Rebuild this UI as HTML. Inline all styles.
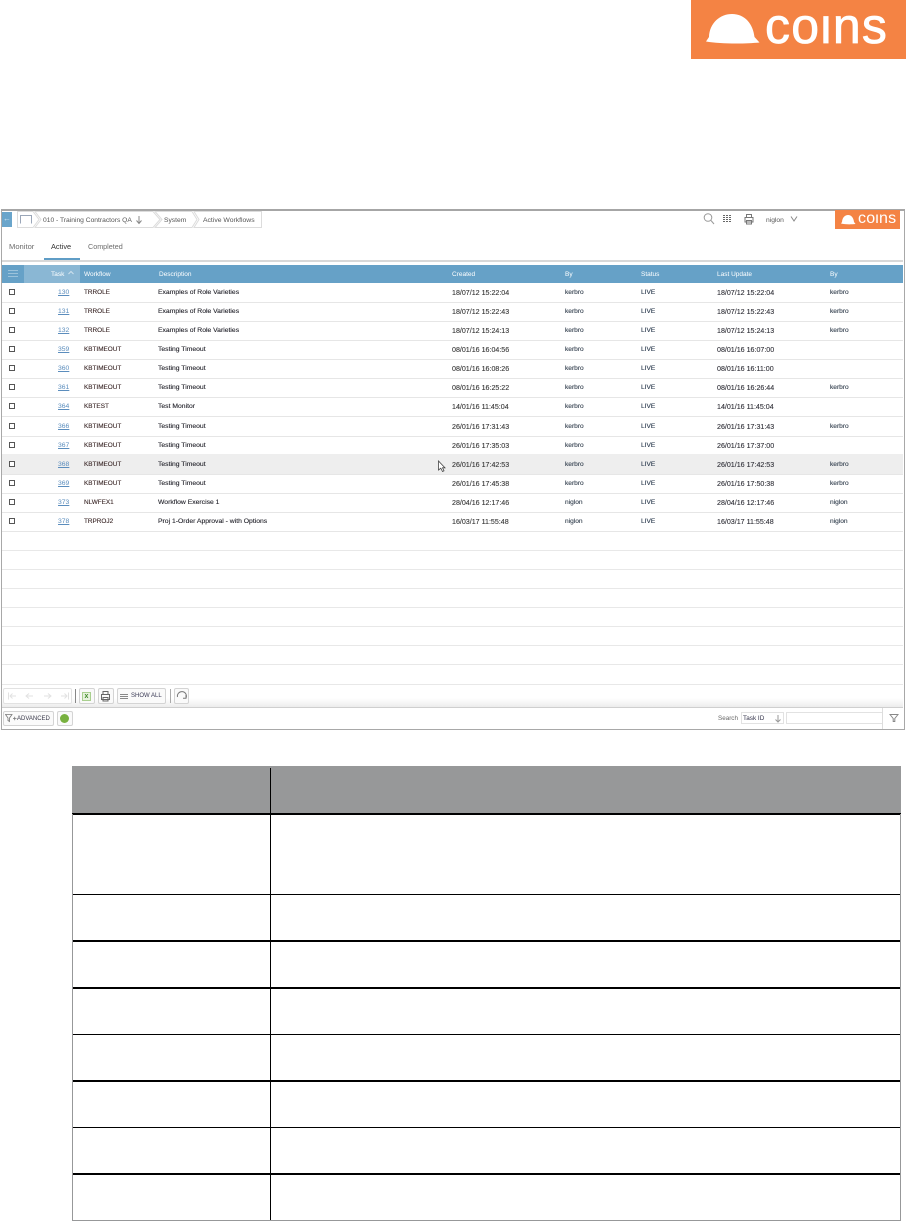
<!DOCTYPE html>
<html><head><meta charset="utf-8">
<style>
html,body{margin:0;padding:0;background:#fff}
body{position:relative;width:906px;height:1221px;overflow:hidden;font-family:"Liberation Sans",sans-serif}
.a{position:absolute}
.t{position:absolute;font-size:6.7px;line-height:10px;white-space:nowrap;color:#2b2b33}
.h{position:absolute;top:270px;font-size:6.5px;line-height:10px;color:#fff;white-space:nowrap}
.r{position:absolute;left:2px;width:901px;height:19px;border-bottom:1px solid #e6e6e6}
.r span{position:absolute;top:5px;font-size:6.6px;line-height:10px;white-space:nowrap;color:#24242c;-webkit-text-stroke:.12px currentColor}
.r i{position:absolute;left:7px;top:6px;width:4px;height:4px;border:1px solid #555;background:#fff}
.r .n{left:56px;font-size:6.8px;color:#5b8dbd;text-decoration:underline;-webkit-text-stroke:0}
.r .w{left:82px;font-size:6.4px;color:#3d2a2a}
.r .d{left:156px;font-size:6.8px}
.r .c{left:450px;font-size:7.1px;color:#3a3a3a}
.r .b{left:563px;color:#34404f}
.r .s{left:639px;color:#26364a}
.r .u{left:715px;font-size:7.1px;color:#34343c}
.r .y{left:828px;color:#34404f}
.l{position:absolute;left:2px;width:901px;height:1px;background:#e8e8e8}
.btn{position:absolute;background:#fafafa;border:1px solid #d4d4d4;border-radius:2px;box-sizing:border-box}
.tl{position:absolute;background:#000}
</style></head><body>

<!-- top logo -->
<div class="a" style="left:691px;top:0;width:215px;height:59px;background:#f48344"></div>
<svg class="a" style="left:691px;top:0" width="215" height="59" viewBox="691 0 215 59"><path d="M706 41.500L709 37C709.500 23 720 14 732 14C745 14 753 24 754.500 37L759.500 42.500C745 44 720 44 706 41.500Z" fill="#fff"/></svg>
<div class="a" style="left:765px;top:-4px;font-size:50px;line-height:60px;color:#fff;letter-spacing:1.3px;-webkit-text-stroke:.8px #fff;clip-path:inset(18.500px 0 0 0)">coins</div>

<!-- app frame -->
<div class="a" style="left:1px;top:209px;width:902px;height:518px;border:1px solid #a8a8a8;border-top:2px solid #a6a6a6"></div>

<!-- breadcrumb -->
<div class="a" style="left:2px;top:212px;width:10px;height:15px;background:#6aa5cb"></div>
<div class="a" style="left:3px;top:214px;color:#cfe3f0;font-size:8px;line-height:10px">&#8592;</div>
<svg class="a" style="left:14px;top:210px" width="250" height="19" fill="#fff" stroke="#dcdcdc" stroke-width="1">
<path d="M3.500 1.500H19L25 9.500L19 17.500H3.500Z"/>
<path d="M21 1.500H139L146 9.500L139 17.500H21L27 9.500Z"/>
<path d="M141 1.500H178L183 9.500L178 17.500H141L148 9.500Z"/>
<path d="M180 1.500H247.500V17.500H180L185 9.500Z"/>
<path d="M6.500 13.500V5.500H17.500V13.500" stroke="#9aa6b8" fill="none"/>
<path d="M125 6V13M122.500 10.500L125 13.500L127.500 10.500" stroke="#888" fill="none"/>
</svg>
<div class="t" style="left:43px;top:216px;color:#555">010 - Training Contractors QA</div>
<div class="t" style="left:164px;top:216px;color:#555">System</div>
<div class="t" style="left:203px;top:216px;color:#555;font-size:6.8px">Active Workflows</div>

<!-- top right icons -->
<svg class="a" style="left:700px;top:211px" width="110" height="16" fill="none" stroke="#999" stroke-width="1">
<circle cx="8" cy="6.500" r="3.800"/><path d="M11 9.500L14 13"/>
<path d="M23 4.500h9M23 6.500h9M23 8.500h9M23 10.500h9" stroke="#666" stroke-dasharray="2 1"/>
<path d="M45 6.500h8v4.500h-8zM46.500 6.500V3.500h5v3M46.500 9.500h5V13h-5z" stroke="#777"/>
<path d="M91 5.500L94 10L97 5.500" stroke="#888"/>
</svg>
<div class="t" style="left:766px;top:216px;color:#555">niglon</div>

<!-- small logo -->
<div class="a" style="left:835px;top:210px;width:65px;height:19px;background:#f48344"></div>
<svg class="a" style="left:835px;top:210px" width="65" height="19" viewBox="835 210 65 19"><path d="M841 223.500L842 222C842.300 217.500 845 215 848 215C851.500 215 853.500 218 854 222L855.500 224C851 224.500 845 224.500 841 223.500Z" fill="#fff"/></svg>
<div class="a" style="left:858px;top:208.500px;font-size:16px;line-height:20px;color:#fff;letter-spacing:.2px;clip-path:inset(6px 0 0 0)">coins</div>

<!-- tabs -->
<div class="t" style="left:9px;top:242px;font-size:7.6px;color:#6d6d6d">Monitor</div>
<div class="t" style="left:51px;top:242px;font-size:7.4px;color:#333">Active</div>
<div class="t" style="left:88px;top:242px;font-size:7.2px;color:#6d6d6d">Completed</div>
<div class="a" style="left:44px;top:258px;width:36px;height:2px;background:#5f9dc6"></div>
<div class="a" style="left:2px;top:260px;width:901px;height:2px;background:#d8d8d8"></div>

<!-- grid header -->
<div class="a" style="left:2px;top:265px;width:901px;height:18px;background:#66a1c7"></div>
<div class="a" style="left:24px;top:265px;width:56px;height:18px;background:#8ab7d4"></div>
<div class="a" style="left:8px;top:270px;width:10px;height:1px;background:#9cc3db;box-shadow:0 3px 0 #9cc3db,0 6px 0 #9cc3db"></div>
<div class="h" style="left:51px">Task</div>
<svg class="a" style="left:67px;top:270px" width="8" height="5" fill="none" stroke="#cfe2ee"><path d="M1.500 4L4 1.500L6.500 4"/></svg>
<div class="h" style="left:84px">Workflow</div>
<div class="h" style="left:159px">Description</div>
<div class="h" style="left:452px">Created</div>
<div class="h" style="left:565px">By</div>
<div class="h" style="left:641px">Status</div>
<div class="h" style="left:717px">Last Update</div>
<div class="h" style="left:830px">By</div>

<!-- rows -->
<div class="r" style="top:283px"><i></i><span class="n">130</span><span class="w">TRROLE</span><span class="d">Examples of Role Varieties</span><span class="c">18/07/12 15:22:04</span><span class="b">kerbro</span><span class="s">LIVE</span><span class="u">18/07/12 15:22:04</span><span class="y">kerbro</span></div>
<div class="r" style="top:302px"><i></i><span class="n">131</span><span class="w">TRROLE</span><span class="d">Examples of Role Varieties</span><span class="c">18/07/12 15:22:43</span><span class="b">kerbro</span><span class="s">LIVE</span><span class="u">18/07/12 15:22:43</span><span class="y">kerbro</span></div>
<div class="r" style="top:321px"><i></i><span class="n">132</span><span class="w">TRROLE</span><span class="d">Examples of Role Varieties</span><span class="c">18/07/12 15:24:13</span><span class="b">kerbro</span><span class="s">LIVE</span><span class="u">18/07/12 15:24:13</span><span class="y">kerbro</span></div>
<div class="r" style="top:340px"><i></i><span class="n">359</span><span class="w">KBTIMEOUT</span><span class="d">Testing Timeout</span><span class="c">08/01/16 16:04:56</span><span class="b">kerbro</span><span class="s">LIVE</span><span class="u">08/01/16 16:07:00</span></div>
<div class="r" style="top:359px"><i></i><span class="n">360</span><span class="w">KBTIMEOUT</span><span class="d">Testing Timeout</span><span class="c">08/01/16 16:08:26</span><span class="b">kerbro</span><span class="s">LIVE</span><span class="u">08/01/16 16:11:00</span></div>
<div class="r" style="top:378px"><i></i><span class="n">361</span><span class="w">KBTIMEOUT</span><span class="d">Testing Timeout</span><span class="c">08/01/16 16:25:22</span><span class="b">kerbro</span><span class="s">LIVE</span><span class="u">08/01/16 16:26:44</span><span class="y">kerbro</span></div>
<div class="r" style="top:397px"><i></i><span class="n">364</span><span class="w">KBTEST</span><span class="d">Test Monitor</span><span class="c">14/01/16 11:45:04</span><span class="b">kerbro</span><span class="s">LIVE</span><span class="u">14/01/16 11:45:04</span></div>
<div class="r" style="top:417px"><i></i><span class="n">366</span><span class="w">KBTIMEOUT</span><span class="d">Testing Timeout</span><span class="c">26/01/16 17:31:43</span><span class="b">kerbro</span><span class="s">LIVE</span><span class="u">26/01/16 17:31:43</span><span class="y">kerbro</span></div>
<div class="r" style="top:436px"><i></i><span class="n">367</span><span class="w">KBTIMEOUT</span><span class="d">Testing Timeout</span><span class="c">26/01/16 17:35:03</span><span class="b">kerbro</span><span class="s">LIVE</span><span class="u">26/01/16 17:37:00</span></div>
<div class="r" style="top:454px;height:20px;background:#eeeeee"><i style="top:7px"></i><span class="n" style="top:6px">368</span><span class="w" style="top:6px">KBTIMEOUT</span><span class="d" style="top:6px">Testing Timeout</span><span class="c" style="top:6px">26/01/16 17:42:53</span><span class="b" style="top:6px">kerbro</span><span class="s" style="top:6px">LIVE</span><span class="u" style="top:6px">26/01/16 17:42:53</span><span class="y" style="top:6px">kerbro</span></div>
<div class="r" style="top:474px"><i></i><span class="n">369</span><span class="w">KBTIMEOUT</span><span class="d">Testing Timeout</span><span class="c">26/01/16 17:45:38</span><span class="b">kerbro</span><span class="s">LIVE</span><span class="u">26/01/16 17:50:38</span><span class="y">kerbro</span></div>
<div class="r" style="top:493px"><i></i><span class="n">373</span><span class="w">NLWFEX1</span><span class="d">Workflow Exercise 1</span><span class="c">28/04/16 12:17:46</span><span class="b">niglon</span><span class="s">LIVE</span><span class="u">28/04/16 12:17:46</span><span class="y">niglon</span></div>
<div class="r" style="top:512px"><i></i><span class="n">378</span><span class="w">TRPROJ2</span><span class="d">Proj 1-Order Approval - with Options</span><span class="c">16/03/17 11:55:48</span><span class="b">niglon</span><span class="s">LIVE</span><span class="u">16/03/17 11:55:48</span><span class="y">niglon</span></div>

<div class="l" style="top:550px"></div><div class="l" style="top:569px"></div><div class="l" style="top:588px"></div><div class="l" style="top:607px"></div><div class="l" style="top:626px"></div><div class="l" style="top:645px"></div><div class="l" style="top:664px"></div><div class="l" style="top:684px"></div>

<!-- cursor -->
<svg class="a" style="left:437px;top:460px" width="10" height="13"><path d="M1.500 1V10L3.800 8.200L5.500 11.500L7 10.800L5.500 7.800H8Z" fill="#fff" stroke="#444" stroke-width=".8"/></svg>

<!-- pager -->
<div class="a" style="left:2px;top:685px;width:901px;height:22px;background:linear-gradient(#fff 60%,#ececec)"></div>
<div class="a" style="left:2px;top:707px;width:901px;height:1px;background:#cfcfcf"></div>
<div class="btn" style="left:3px;top:688px;width:69px;height:16px;background:#fff;border-color:#e2e2e2"></div>
<svg class="a" style="left:3px;top:688px" width="69" height="16" fill="none" stroke="#e2e2e2"><path d="M5.500 4.500V11.500M13 8H7M9.500 5.500L7 8L9.500 10.500M30 8H23M26 5.500L23 8L26 10.500M41 8H48M45 5.500L48 8L45 10.500M58 8H64M61.500 5.500L64 8L61.500 10.500M65.500 4.500V11.500"/></svg>
<div class="a" style="left:75px;top:689px;width:1px;height:14px;background:#888"></div>
<div class="btn" style="left:79px;top:688px;width:16px;height:16px"></div>
<div class="a" style="left:82px;top:692px;width:7px;height:7px;border:1px solid #a9cf8f;background:#e6f2dc;color:#3f8a2a;font-size:7px;line-height:7px;text-align:center;font-weight:700">x</div>
<div class="btn" style="left:98px;top:688px;width:16px;height:16px"></div>
<svg class="a" style="left:97px;top:688px" width="17" height="16" fill="none" stroke="#666"><path d="M4.500 6.500h8v5h-8zM6 6.500V3.500h5v3M6 9.500h5V13H6z"/></svg>
<div class="btn" style="left:117px;top:688px;width:49px;height:16px"></div>
<div class="a" style="left:120px;top:694px;width:8px;height:1px;background:#888;box-shadow:0 2px 0 #888,0 4px 0 #888"></div>
<div class="t" style="left:131px;top:691px;font-size:6px;color:#3a3a55">SHOW ALL</div>
<div class="a" style="left:170px;top:689px;width:1px;height:14px;background:#aaa"></div>
<div class="btn" style="left:174px;top:688px;width:15px;height:16px"></div>
<svg class="a" style="left:174px;top:688px" width="16" height="16" fill="none" stroke="#777"><path d="M3.500 9A4.500 4.500 0 1 1 12 10M12 7V10.200H9"/></svg>

<!-- filter bar -->
<div class="btn" style="left:3px;top:711px;width:51px;height:15px"></div>
<svg class="a" style="left:5px;top:713px" width="12" height="10" fill="none" stroke="#777" stroke-width=".8"><path d="M.5 1.500H7L4.500 5V8.500L3 7.500V5ZM8 5.500H11.500M9.700 3.700V7.300"/></svg>
<div class="t" style="left:17px;top:714px;font-size:6px;color:#3a3a4a">ADVANCED</div>
<div class="btn" style="left:57px;top:711px;width:16px;height:15px"></div>
<div class="a" style="left:60px;top:714px;width:9px;height:9px;border-radius:50%;background:#78b13f"></div>
<div class="t" style="left:718px;top:714px;font-size:6.3px;color:#666">Search</div>
<div class="a" style="left:741px;top:712px;width:43px;height:12px;border:1px solid #e2e2e2;box-sizing:border-box"></div>
<div class="t" style="left:743px;top:714px;font-size:6.4px;color:#33334a">Task ID</div>
<svg class="a" style="left:774px;top:714px" width="9" height="9" fill="none" stroke="#999"><path d="M4 1V8M1.500 5.500L4 8L6.500 5.500"/></svg>
<div class="a" style="left:786px;top:712px;width:97px;height:12px;border:1px solid #e2e2e2;box-sizing:border-box"></div>
<div class="a" style="left:882px;top:708px;width:1px;height:21px;background:#ddd"></div>
<svg class="a" style="left:889px;top:713px" width="10" height="10" fill="none" stroke="#888"><path d="M1 1.500H9L5.800 5.500V8.500H4.200V5.500Z"/></svg>

<!-- lower table -->
<div class="a" style="left:72px;top:766px;width:829px;height:47px;background:#979899"></div>
<div class="tl" style="left:72px;top:813px;width:829px;height:1.500px"></div>
<div class="tl" style="left:72px;top:894px;width:828px;height:1px"></div>
<div class="tl" style="left:72px;top:940px;width:828px;height:2px"></div>
<div class="tl" style="left:72px;top:987px;width:828px;height:2px"></div>
<div class="tl" style="left:72px;top:1034px;width:828px;height:1px"></div>
<div class="tl" style="left:72px;top:1080px;width:828px;height:2px"></div>
<div class="tl" style="left:72px;top:1127px;width:828px;height:1px"></div>
<div class="tl" style="left:72px;top:1173px;width:828px;height:2px"></div>
<div class="tl" style="left:270px;top:768px;width:1px;height:452px"></div>
<div class="a" style="left:72px;top:814px;width:1px;height:407px;background:#979899"></div>
<div class="a" style="left:900px;top:814px;width:1px;height:407px;background:#979899"></div>
<div class="a" style="left:72px;top:1220px;width:829px;height:1px;background:#979899"></div>
</body></html>
